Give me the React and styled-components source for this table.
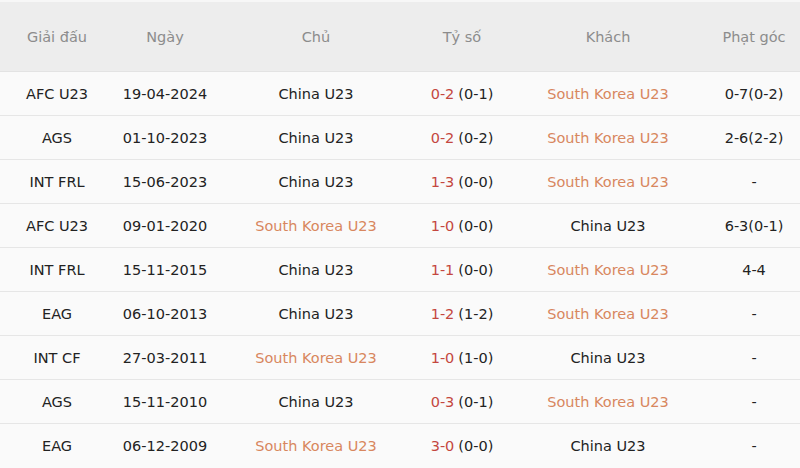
import React from "react";
import styled, { createGlobalStyle } from "styled-components";

const GlobalStyle = createGlobalStyle`
  html, body {
    margin: 0;
    padding: 0;
    background: #fafafa;
  }
  body {
    font-family: "DejaVu Sans", "Noto Sans", sans-serif;
  }
`;

const Table = styled.div`
  width: 800px;
  display: grid;
  grid-template-columns: 114px 102px 200px 92px 200px 92px;
  background: #fafafa;
  border-top: 2px solid #f7f7f7;
`;

const HeadCell = styled.div`
  height: 70px;
  background: #ededed;
  color: #8c8c8c;
  font-size: 14.5px;
  display: flex;
  align-items: center;
  justify-content: center;
  padding-top: 1px;
  box-sizing: border-box;
  border-bottom: 1px solid #e3e3e3;
`;

const Cell = styled.div`
  height: 44px;
  box-sizing: border-box;
  border-bottom: ${(p) => (p.last ? "none" : "1px solid #e6e6e6")};
  display: flex;
  align-items: center;
  justify-content: center;
  font-size: 14.5px;
  color: ${(p) => (p.away ? "#d8875e" : "#222")};
  white-space: nowrap;
`;

const Goals = styled.span`
  color: #c4473f;
  margin-right: 4px;
`;

const rows = [
  ["AFC U23", "19-04-2024", "China U23", "0-2", "(0-1)", "South Korea U23", "0-7(0-2)", false],
  ["AGS", "01-10-2023", "China U23", "0-2", "(0-2)", "South Korea U23", "2-6(2-2)", false],
  ["INT FRL", "15-06-2023", "China U23", "1-3", "(0-0)", "South Korea U23", "-", false],
  ["AFC U23", "09-01-2020", "South Korea U23", "1-0", "(0-0)", "China U23", "6-3(0-1)", true],
  ["INT FRL", "15-11-2015", "China U23", "1-1", "(0-0)", "South Korea U23", "4-4", false],
  ["EAG", "06-10-2013", "China U23", "1-2", "(1-2)", "South Korea U23", "-", false],
  ["INT CF", "27-03-2011", "South Korea U23", "1-0", "(1-0)", "China U23", "-", true],
  ["AGS", "15-11-2010", "China U23", "0-3", "(0-1)", "South Korea U23", "-", false],
  ["EAG", "06-12-2009", "South Korea U23", "3-0", "(0-0)", "China U23", "-", true],
];

const headers = ["Giải đấu", "Ngày", "Chủ", "Tỷ số", "Khách", "Phạt góc"];

export default function App() {
  return (
    <>
      <GlobalStyle />
      <Table>
        {headers.map((h) => (
          <HeadCell key={h}>{h}</HeadCell>
        ))}
        {rows.map((r, i) => {
          const last = i === rows.length - 1;
          return (
            <React.Fragment key={i}>
              <Cell last={last}>{r[0]}</Cell>
              <Cell last={last}>{r[1]}</Cell>
              <Cell last={last} away={r[7]}>{r[2]}</Cell>
              <Cell last={last}>
                <Goals>{r[3]}</Goals>
                {r[4]}
              </Cell>
              <Cell last={last} away={!r[7]}>{r[5]}</Cell>
              <Cell last={last}>{r[6]}</Cell>
            </React.Fragment>
          );
        })}
      </Table>
    </>
  );
}
